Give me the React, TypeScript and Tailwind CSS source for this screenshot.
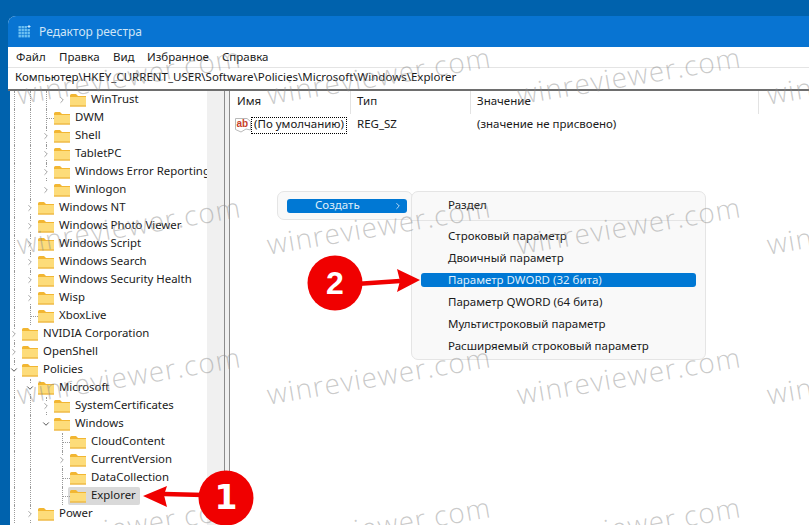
import React from "react";
import { ChevronRight, ChevronDown } from "lucide-react";

type Node = { t: string; l: number; c?: "r" | "d"; g: number[]; leaf?: boolean; sel?: boolean };

const tree: Node[] = [
  { t: "WinTrust", l: 3, c: "r", g: [0, 1, 2] },
  { t: "DWM", l: 2, g: [0, 1, 2], leaf: true },
  { t: "Shell", l: 2, c: "r", g: [0, 1, 2] },
  { t: "TabletPC", l: 2, c: "r", g: [0, 1, 2] },
  { t: "Windows Error Reporting", l: 2, c: "r", g: [0, 1, 2] },
  { t: "Winlogon", l: 2, c: "r", g: [0, 1] },
  { t: "Windows NT", l: 1, c: "r", g: [0, 1] },
  { t: "Windows Photo Viewer", l: 1, c: "r", g: [0, 1] },
  { t: "Windows Script", l: 1, c: "r", g: [0, 1] },
  { t: "Windows Search", l: 1, c: "r", g: [0, 1] },
  { t: "Windows Security Health", l: 1, c: "r", g: [0, 1] },
  { t: "Wisp", l: 1, c: "r", g: [0, 1] },
  { t: "XboxLive", l: 1, g: [0, 1], leaf: true },
  { t: "NVIDIA Corporation", l: 0, c: "r", g: [0] },
  { t: "OpenShell", l: 0, c: "r", g: [0] },
  { t: "Policies", l: 0, c: "d", g: [0] },
  { t: "Microsoft", l: 1, c: "d", g: [0, 1] },
  { t: "SystemCertificates", l: 2, c: "r", g: [0, 1, 2] },
  { t: "Windows", l: 2, c: "d", g: [0, 1] },
  { t: "CloudContent", l: 3, g: [0, 1, 3], leaf: true },
  { t: "CurrentVersion", l: 3, c: "r", g: [0, 1, 3] },
  { t: "DataCollection", l: 3, g: [0, 1, 3], leaf: true },
  { t: "Explorer", l: 3, g: [0, 1, 3], leaf: true, sel: true },
  { t: "Power", l: 1, c: "r", g: [0, 1] },
];

function Folder() {
  return (
    <svg width="16" height="14" viewBox="0 0 16 14" className="shrink-0">
      <path d="M0 2.5 Q0 1 1.5 1 H6 L8 3 H16 V13 H0 Z" fill="#f2b632" />
      <rect x="0" y="4" width="16" height="9.5" fill="#fddc7a" />
      <rect x="0" y="12.5" width="16" height="1" fill="#e8a92e" />
    </svg>
  );
}

function Row({ n }: { n: Node }) {
  return (
    <div className="flex items-center h-[18px] relative whitespace-nowrap">
      {[0, 1, 2, 3].slice(0, n.l + 1).map((i) => (
        <div key={i} className="relative w-4 h-full shrink-0">
          {n.g.includes(i) && (
            <div className="absolute left-2 top-0 bottom-0 border-l border-dotted border-[#9a9a9a]" />
          )}
          {i === n.l && n.leaf && (
            <div className="absolute left-2 top-[9px] w-2 border-t border-dotted border-[#9a9a9a]" />
          )}
          {i === n.l && n.c === "r" && (
            <div className="absolute left-[3px] top-[4px] bg-white">
              <ChevronRight size={10} strokeWidth={1.5} className="text-[#6b6b6b]" />
            </div>
          )}
          {i === n.l && n.c === "d" && (
            <div className="absolute left-[3px] top-[4px] bg-white">
              <ChevronDown size={10} strokeWidth={2} className="text-[#333]" />
            </div>
          )}
        </div>
      ))}
      <div className={`flex items-center h-full gap-[5px] -ml-[2px] pl-[2px] pr-[4px] ${n.sel ? "bg-[#d9d9d9] rounded-[2px]" : ""}`}>
        <Folder />
        <span className="text-[11.4px] text-[#1a1a1a] pb-[3px]">{n.t}</span>
      </div>
    </div>
  );
}

const marks: [number, number][] = [17, 267, 517, 767].flatMap((x) =>
  [102, 252, 402, 552].map((y) => [x, y] as [number, number])
);

function Menu2Item({ t, sel }: { t: string; sel?: boolean }) {
  return (
    <div className={`h-[14px] mx-[9px] mb-2 rounded-[3px] flex items-center pl-[27px] text-[11.5px] ${sel ? "bg-[#0078d4] text-[#dfeefa]" : "text-[#1a1a1a]"}`}>
      <span className="-mt-px">{t}</span>
    </div>
  );
}

export default function App() {
  return (
    <div className="relative w-[809px] h-[525px] overflow-hidden bg-[#0062ad] pt-4 pl-2 font-['Noto_Sans',sans-serif]">
      <div className="flex flex-col h-[509px] rounded-tl-lg overflow-hidden bg-white">
        <div className="h-[31px] bg-[#0874d2] flex items-center pl-[10px] gap-2 shrink-0">
          <svg width="13" height="13" viewBox="0 0 13 13">
            {[0, 1, 2, 3].map((r) =>
              [0, 1, 2, 3].map((c) =>
                r === 0 && c === 3 ? null : (
                  <rect key={`${r}${c}`} x={c * 3 + 0.5} y={r * 3 + 1} width="2.4" height="2.4" fill="#6cc0f2" />
                )
              )
            )}
            <path d="M11 0 V3 M9.5 1.5 H12.5" stroke="#d0ecff" />
          </svg>
          <span className="text-[12px] text-[#cfe5f7]">Редактор реестра</span>
        </div>
        <div className="h-5 bg-white flex items-center pl-2 text-[11.5px] text-[#1a1a1a] shrink-0">
          <span className="w-[43px]">Файл</span>
          <span className="w-[54px]">Правка</span>
          <span className="w-[34px]">Вид</span>
          <span className="w-[75px]">Избранное</span>
          <span>Справка</span>
        </div>
        <div className="h-[21px] border-t border-[#e4e4e4] bg-white flex items-center pl-[7px] text-[11.5px] text-[#1a1a1a] border-b-2 border-b-[#6e6e6e] box-content shrink-0">
          <span className="pb-[3px]">Компьютер\HKEY_CURRENT_USER\Software\Policies\Microsoft\Windows\Explorer</span>
        </div>
        <div className="flex flex-1 min-h-0 border-l-2 border-[#0062ad]">
          <div className="w-[197px] overflow-hidden shrink-0">
            <div className="-ml-1">
              {tree.map((n) => (
                <Row key={n.t + n.l} n={n} />
              ))}
            </div>
          </div>
          <div className="w-[17px] bg-[#f0f0f0] shrink-0" />
          <div className="w-[6px] bg-[#f0f0f0] border-x border-[#8c8c8c] shrink-0" />
          <div className="flex-1 bg-white text-[11.5px] text-[#1a1a1a]">
            <div className="flex h-[25px] pb-[2px]">
              <div className="w-[121px] pl-[7px] pt-[2px] border-r border-[#e3e3e3] leading-4">Имя</div>
              <div className="w-[120px] pl-[6px] pt-[2px] border-r border-[#e3e3e3] leading-4">Тип</div>
              <div className="w-[288px] pl-[6px] pt-[2px] border-r border-[#e3e3e3] leading-4">Значение</div>
            </div>
            <div className="flex h-[18px] items-center">
              <div className="w-[121px] flex items-center pl-[5px]">
                <svg width="16" height="16" viewBox="0 0 16 16" className="shrink-0">
                  <path d="M0.5 1.5 H12 L15.5 4.5 V13 L11 12 L6 15 L0.5 12.5 Z" fill="#fff" stroke="#b9b9b9" />
                  <text x="1.5" y="10" fontSize="10" fontWeight="700" fill="#c8412a" fontFamily="Liberation Sans">ab</text>
                </svg>
                <span className="border border-dotted border-black h-[17px] flex items-center px-[2px] pb-[2px] whitespace-nowrap">(По умолчанию)</span>
              </div>
              <div className="w-[120px] pl-[6px] pb-[3px]">REG_SZ</div>
              <div className="pl-[6px] pb-[3px]">(значение не присвоено)</div>
            </div>
          </div>
        </div>
      </div>

      {/* Context menus */}
      <div className="absolute left-[277px] top-[191px] w-[136px] h-[29px] bg-[#f9f9f9] border border-[#e5e5e5] rounded-[7px] flex items-center pl-[9px]">
        <div className="w-[120px] h-[14px] bg-[#0078d4] rounded-[3px] flex items-center pl-[28px] pr-[4px] justify-between text-[11.5px] text-[#dfeefa]">
          <span className="-mt-px">Создать</span>
          <ChevronRight size={10} strokeWidth={2} />
        </div>
      </div>
      <div className="absolute left-[411px] top-[191px] w-[295px] h-[169px] bg-[#f9f9f9] border border-[#e5e5e5] rounded-[7px] pt-[6px]">
        <Menu2Item t="Раздел" />
        <div className="h-px bg-[#e5e5e5] mb-2" />
        <Menu2Item t="Строковый параметр" />
        <Menu2Item t="Двоичный параметр" />
        <Menu2Item t="Параметр DWORD (32 бита)" sel />
        <Menu2Item t="Параметр QWORD (64 бита)" />
        <Menu2Item t="Мультистроковый параметр" />
        <Menu2Item t="Расширяемый строковый параметр" />
      </div>

      {/* Watermarks, clipped to the window's client area */}
      <div className="absolute left-[10px] top-[47px] right-0 bottom-0 overflow-hidden pointer-events-none">
        {marks.map(([x, y], i) => (
          <div
            key={i}
            style={{ left: x - 10, top: y - 47 - 22 }}
            className="absolute origin-left -rotate-[9.6deg] text-[28px] font-light tracking-[1px] text-[#8a8a8a]/45 whitespace-nowrap font-['Open_Sans',sans-serif] leading-none"
          >
            winreviewer.com
          </div>
        ))}
      </div>

      {/* Callouts */}
      <svg width="150" height="60" viewBox="0 0 150 60" className="absolute left-[306px] top-[254px]">
        <circle cx="29" cy="29" r="27.5" fill="#f00000" />
        <path d="M50 30 L94 27" stroke="#f00000" strokeWidth="4.5" />
        <path d="M91 15 L114 26 L91 38 L94 27 Z" fill="#f00000" />
      </svg>
      <div className="absolute left-[307px] top-[255px] w-[56px] h-[56px] flex items-center justify-center text-[32px] font-bold text-white font-['Liberation_Sans',sans-serif] leading-none">2</div>
      <svg width="120" height="60" viewBox="0 0 120 60" className="absolute left-[140px] top-[469px]">
        <circle cx="86" cy="29" r="27.5" fill="#f00000" />
        <path d="M24 25 L64 26" stroke="#f00000" strokeWidth="4.5" />
        <path d="M3 27 L27 17 L24 26 L27 38 Z" fill="#f00000" />
      </svg>
      <div className="absolute left-[198px] top-[469px] w-[56px] h-[56px] flex items-center justify-center text-[33px] font-bold text-white font-['DejaVu_Sans',sans-serif] leading-none">1</div>
    </div>
  );
}
